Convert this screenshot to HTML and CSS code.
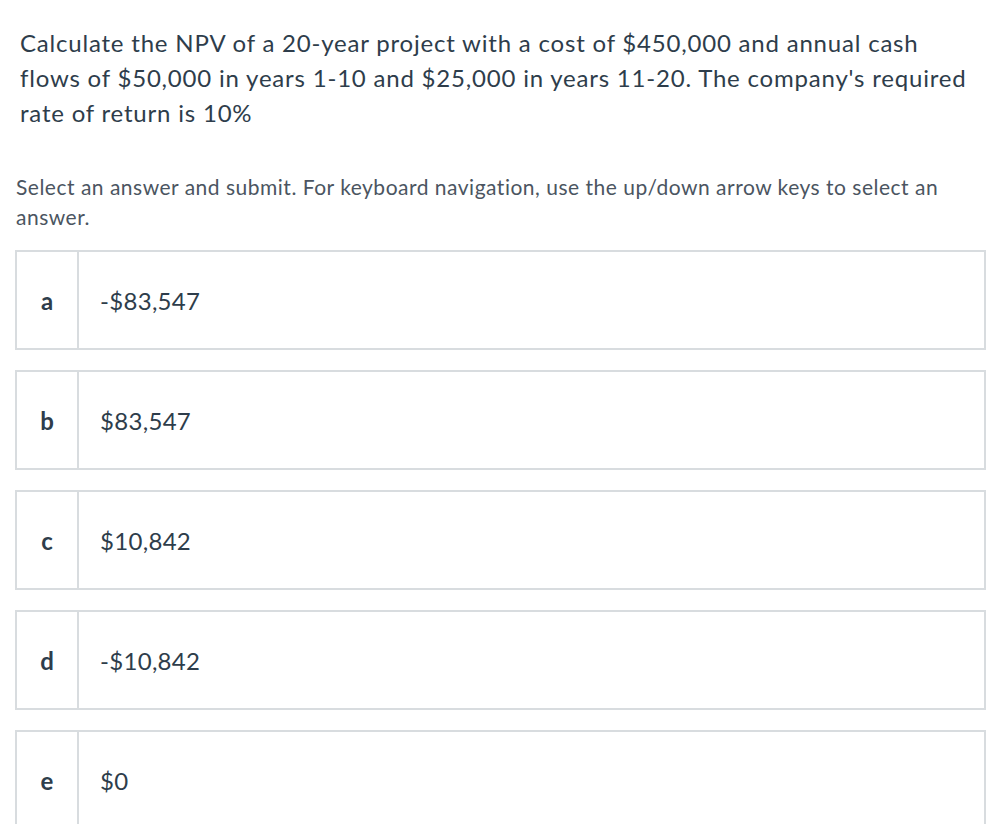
FILE: index.html
```html
<!DOCTYPE html>
<html>
<head>
<meta charset="utf-8">
<link rel="stylesheet" href="styles.css">
</head>
<body>
<main class="page">
  <p class="question">Calculate the NPV of a 20-year project with a cost of $450,000 and annual cash flows of $50,000 in years 1-10 and $25,000 in years 11-20. The company's required rate of return is 10%</p>
  <p class="instructions">Select an answer and submit. For keyboard navigation, use the up/down arrow keys to select an answer.</p>
  <ul class="answers">
    <li class="answer"><span class="letter">a</span><span class="value">-$83,547</span></li>
    <li class="answer"><span class="letter">b</span><span class="value">$83,547</span></li>
    <li class="answer"><span class="letter">c</span><span class="value">$10,842</span></li>
    <li class="answer"><span class="letter">d</span><span class="value">-$10,842</span></li>
    <li class="answer"><span class="letter">e</span><span class="value">$0</span></li>
  </ul>
</main>
</body>
</html>
```
FILE: styles.css
```css
html, body {
  margin: 0;
  padding: 0;
  background: #ffffff;
}
body {
  font-family: Lato, "Open Sans", sans-serif;
  color: #333f4b;
}
.page {
  padding: 25px 15px 0 15px;
  width: 971px;
}
.question {
  margin: 0 0 0 5px;
  max-width: 952px;
  font-size: 24px;
  line-height: 35px;
  letter-spacing: 0.8px;
  color: #2e3d4b;
}
.instructions {
  margin: 42px 0 0 1px;
  font-size: 21px;
  line-height: 30px;
  letter-spacing: 0.5px;
  color: #4b5561;
}
.answers {
  list-style: none;
  margin: 18px 0 0 0;
  padding: 0;
  display: flex;
  flex-direction: column;
  gap: 20px;
}
.answer {
  display: flex;
  height: 96px;
  border: 2px solid #d8dcdf;
}
.letter {
  width: 60px;
  border-right: 2px solid #d8dcdf;
  display: flex;
  align-items: center;
  justify-content: center;
  font-weight: bold;
  font-size: 24px;
  color: #2e3d4b;
}
.value {
  display: flex;
  align-items: center;
  padding-left: 21px;
  font-size: 24px;
  letter-spacing: 0.3px;
  color: #2e3d4b;
}
```
